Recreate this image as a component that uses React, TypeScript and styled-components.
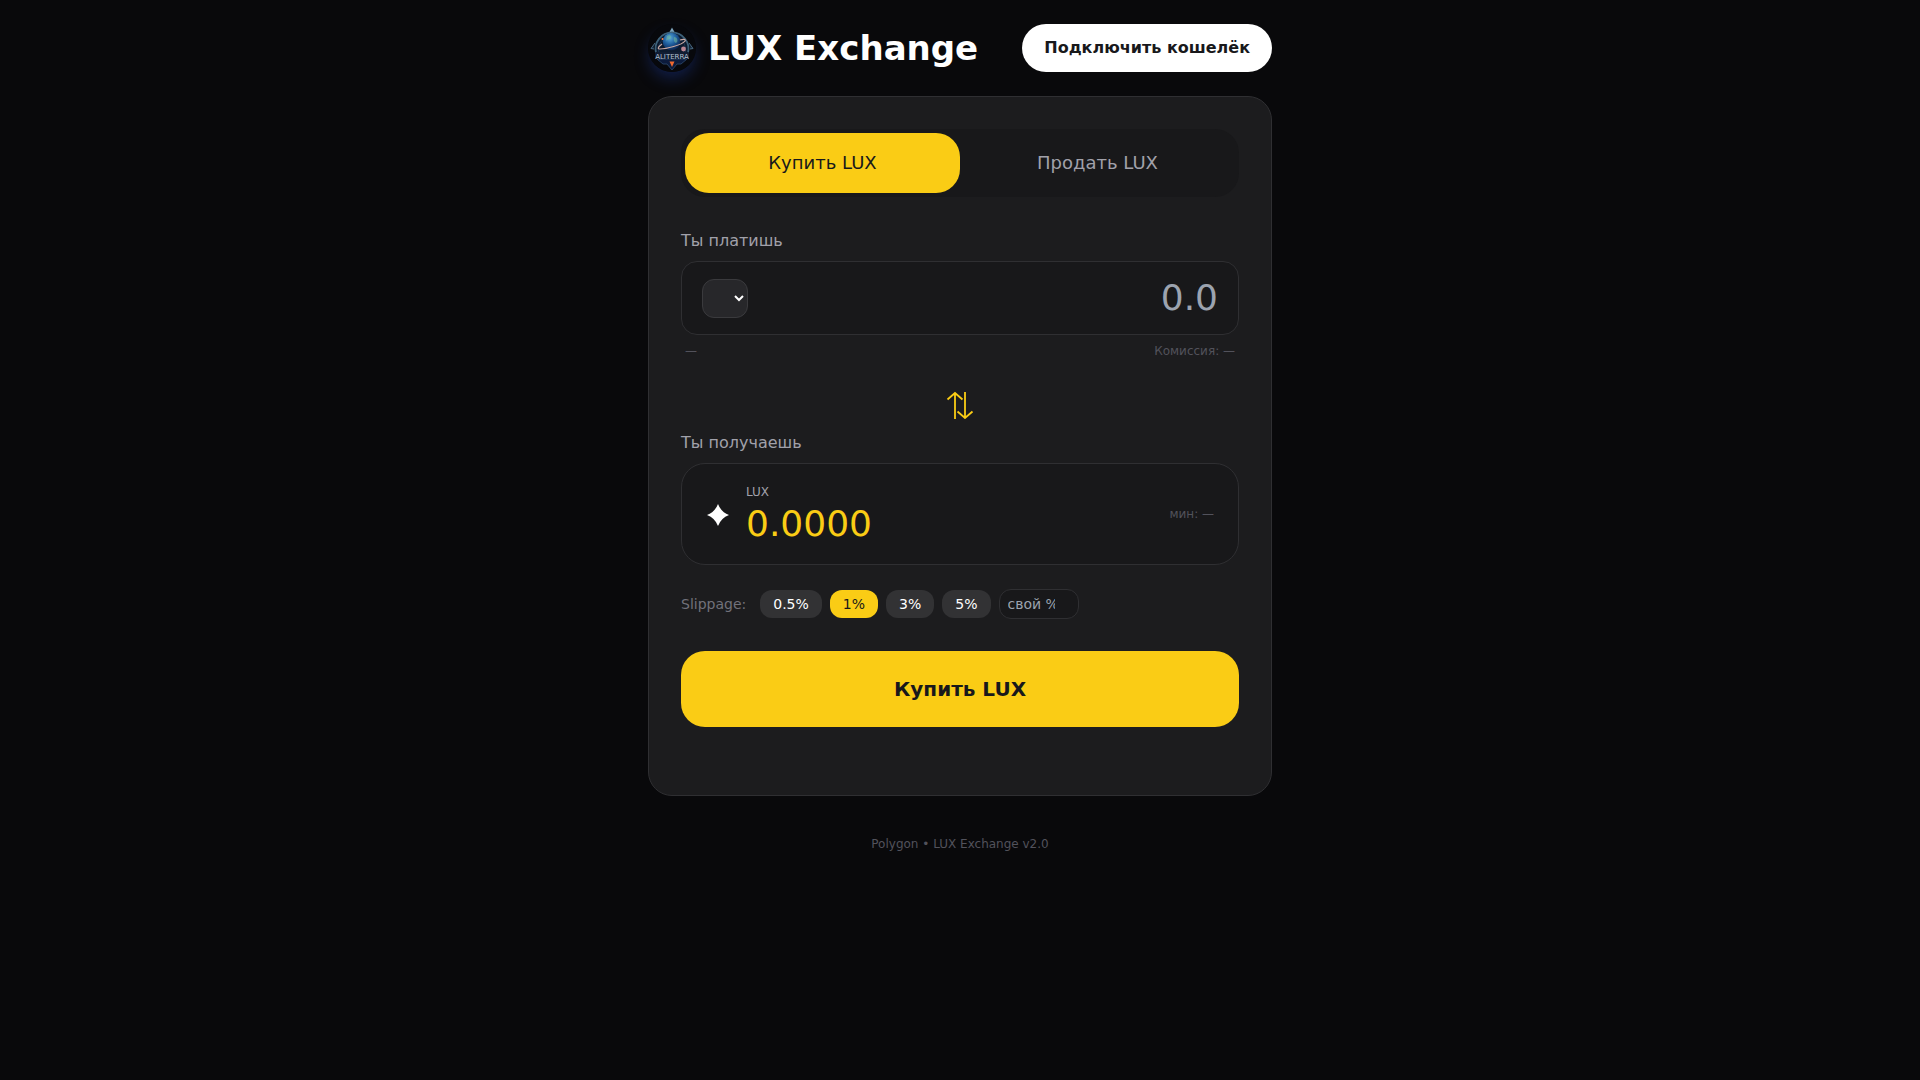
import { useState } from 'react';
import styled, { createGlobalStyle } from 'styled-components';

const GlobalStyle = createGlobalStyle`
  * {
    box-sizing: border-box;
  }
  body {
    margin: 0;
    min-height: 100vh;
    background-color: #09090b;
    color: #ffffff;
    font-family: Verdana, 'DejaVu Sans', sans-serif;
    font-size: 16px;
    line-height: 24px;
  }
  button, input, select {
    font-family: inherit;
    color: inherit;
    margin: 0;
  }
  button {
    border: none;
    cursor: pointer;
  }
`;

const Wrapper = styled.div`
  max-width: 672px;
  margin: 0 auto;
  padding: 24px;
`;
const Header = styled.header`
  display: flex;
  align-items: center;
  justify-content: space-between;
  margin-bottom: 24px;
`;
const Brand = styled.div`
  display: flex;
  align-items: center;
  gap: 12px;
`;
const LogoIcon = styled.svg`
  width: 48px;
  height: 48px;
  border-radius: 50%;
  box-shadow: 0 8px 16px -2px rgba(30, 64, 175, 0.4);
`;
const Title = styled.h1`
  margin: 0;
  font-size: 34px;
  line-height: 42px;
  font-weight: 700;
`;
const ConnectButton = styled.button`
  padding: 12px 22px;
  border-radius: 24px;
  background-color: #ffffff;
  color: #18181b;
  font-size: 16px;
  line-height: 24px;
  font-weight: 700;
`;
const Card = styled.main`
  padding: 32px;
  border: 1px solid #2f2f32;
  border-radius: 24px;
  background-color: #1c1c1e;
`;
const Tabs = styled.div`
  display: flex;
  padding: 4px;
  margin-bottom: 32px;
  border-radius: 24px;
  background-color: #18181a;
`;
const Tab = styled.button<{ $active: boolean }>`
  flex: 1;
  padding: 16px;
  border-radius: 24px;
  background-color: ${(props) => (props.$active ? '#facc15' : 'transparent')};
  color: ${(props) => (props.$active ? '#18181b' : '#a1a1aa')};
  font-size: 18px;
  line-height: 28px;
`;
const Label = styled.label`
  display: block;
  margin-bottom: 8px;
  color: #a1a1aa;
`;
const PayBox = styled.div`
  display: flex;
  align-items: center;
  padding: 16px 20px;
  border: 1px solid #2f2f32;
  border-radius: 16px;
  background-color: #18181a;
`;
const TokenSelect = styled.select`
  padding: 8px 12px;
  border: 1px solid #3a3a3d;
  border-radius: 12px;
  background-color: #27272a;
  font-size: 16px;
`;
const AmountInput = styled.input`
  flex: 1;
  min-width: 0;
  height: 40px;
  padding: 0;
  border: none;
  outline: none;
  background: transparent;
  font-size: 36px;
  line-height: 40px;
  text-align: right;
  &::placeholder {
    color: #9ca3af;
  }
`;
const Info = styled.div`
  display: flex;
  justify-content: space-between;
  margin-top: 8px;
  padding: 0 4px;
  color: #52525b;
  font-size: 12px;
  line-height: 16px;
`;
const Arrows = styled.div`
  display: flex;
  justify-content: center;
  padding: 32px 0 12px;
`;
const ReceiveBox = styled.div`
  display: flex;
  align-items: center;
  gap: 12px;
  padding: 20px 24px;
  border: 1px solid #2f2f32;
  border-radius: 24px;
  background-color: #18181a;
`;
const Receive = styled.div`
  flex: 1;
  display: flex;
  flex-direction: column;
  gap: 4px;
`;
const Token = styled.span`
  color: #a1a1aa;
  font-size: 12px;
  line-height: 16px;
`;
const Amount = styled.output`
  color: #facc15;
  font-size: 36px;
  line-height: 40px;
`;
const Minimum = styled.span`
  color: #52525b;
  font-size: 12px;
  line-height: 16px;
`;
const Slippage = styled.div`
  display: flex;
  align-items: center;
  gap: 8px;
  margin: 24px 0 32px;
`;
const SlippageLabel = styled.label`
  margin-right: 6px;
  color: #71717a;
  font-size: 14px;
  line-height: 20px;
`;
const Chip = styled.button<{ $active: boolean }>`
  padding: 4px 13px;
  border-radius: 12px;
  background-color: ${(props) => (props.$active ? '#facc15' : '#323234')};
  color: ${(props) => (props.$active ? '#18181b' : '#ffffff')};
  font-size: 14px;
  line-height: 20px;
`;
const CustomInput = styled.input`
  width: 80px;
  height: 30px;
  padding: 4px 8px;
  border: 1px solid #2f2f32;
  border-radius: 12px;
  outline: none;
  background-color: #18181a;
  font-size: 14px;
  line-height: 20px;
  &::placeholder {
    color: #9ca3af;
  }
`;
const SubmitButton = styled.button`
  width: 100%;
  padding: 24px;
  border-radius: 24px;
  background-color: #facc15;
  color: #18181b;
  font-size: 20px;
  line-height: 28px;
  font-weight: 700;
`;
const Status = styled.div`
  min-height: 20px;
  margin-top: 16px;
`;
const Footer = styled.footer`
  margin-top: 40px;
  color: #52525b;
  font-size: 12px;
  line-height: 16px;
  text-align: center;
`;

function Logo() {
  return (
    <LogoIcon viewBox="0 0 48 48" aria-hidden="true">
      <defs>
        <radialGradient id="planet" cx="0.4" cy="0.3" r="0.75">
          <stop offset="0" stopColor="#5aa9d6" />
          <stop offset="0.5" stopColor="#1d5c9c" />
          <stop offset="1" stopColor="#0b1d45" />
        </radialGradient>
      </defs>
      <circle cx="24" cy="24" r="24" fill="#07080c" />
      <path d="M24 3.500l2.500 4.500h-5z" fill="#7fa6bd" />
      <path d="M8 29a16.500 16.500 0 1 1 32 0" fill="#0c1a2e" stroke="#3d6179" strokeWidth="1.800" />
      <path d="M11 29a13.500 13.500 0 1 1 26 0" fill="none" stroke="#1c3550" strokeWidth="1" />
      <path d="M7 19l-4 5.500 3 .5M41 19l4 5.500-3 .5" fill="#16283c" stroke="#49677f" strokeWidth="1" />
      <circle cx="23.500" cy="17.500" r="8.800" fill="url(#planet)" />
      <path d="M19 12c3-2 5 0 4 2s-4 1-5 3zM26 13c3 0 4 3 3 5s-4 0-3-5z" fill="#6fb49b" opacity="0.6" />
      <path d="M14 20c-4 3-5 5-2 5 6 0 22-4 25-8 1-2-2-2-5-1" fill="none" stroke="#c9a9a4" strokeWidth="1.200" />
      <circle cx="14.500" cy="15" r="1" fill="#ff8245" />
      <circle cx="35.500" cy="25" r="2.400" fill="#b98592" />
      <path d="M9 35h30l-6 5h-4l-5 6-5-6h-4z" fill="#0c1b3c" stroke="#274062" strokeWidth="1" />
      <path d="M21.500 37.500h5L24 43z" fill="#f0692f" />
      <rect x="7" y="28" width="34" height="7" rx="1" fill="#111d33" />
      <text x="24" y="35" fill="#b4c2d2" fontFamily="DejaVu Sans" fontSize="7" textAnchor="middle">
        ALITERRA
      </text>
    </LogoIcon>
  );
}

function SwapIcon() {
  return (
    <svg width="28" height="28" viewBox="0 0 28 28" fill="none" stroke="#facc15" strokeWidth="1.800" aria-hidden="true">
      <path d="M9 28V2M1.500 8.500L9 2l7.500 6.500" />
      <path d="M19 1v26M11.500 20.500L19 27l7.500-6.500" />
    </svg>
  );
}

function StarIcon() {
  return (
    <svg width="28" height="24" viewBox="0 0 28 24" fill="#ffffff" aria-hidden="true">
      <path d="M12 2Q15 10 23 13Q15 16 12 24Q9 16 1 13Q9 10 12 2Z" />
    </svg>
  );
}

const slippages = ['0.5', '1', '3', '5'];

export default function App() {
  const [mode, setMode] = useState('buy');
  const [slippage, setSlippage] = useState('1');

  return (
    <>
      <GlobalStyle />
      <Wrapper>
        <Header>
          <Brand>
            <Logo />
            <Title>LUX Exchange</Title>
          </Brand>
          <ConnectButton>Подключить кошелёк</ConnectButton>
        </Header>
        <Card>
          <Tabs>
            <Tab $active={mode === 'buy'} onClick={() => setMode('buy')}>
              Купить LUX
            </Tab>
            <Tab $active={mode === 'sell'} onClick={() => setMode('sell')}>
              Продать LUX
            </Tab>
          </Tabs>
          <Label id="pay-label" htmlFor="pay">
            Ты платишь
          </Label>
          <PayBox>
            <TokenSelect aria-labelledby="pay-label" />
            <AmountInput id="pay" inputMode="decimal" placeholder="0.0" />
          </PayBox>
          <Info>
            <span>—</span>
            <span>Комиссия: —</span>
          </Info>
          <Arrows>
            <SwapIcon />
          </Arrows>
          <Label htmlFor="receive">Ты получаешь</Label>
          <ReceiveBox>
            <StarIcon />
            <Receive>
              <Token>LUX</Token>
              <Amount id="receive">0.0000</Amount>
            </Receive>
            <Minimum>мин: —</Minimum>
          </ReceiveBox>
          <Slippage>
            <SlippageLabel htmlFor="slippage">Slippage:</SlippageLabel>
            {slippages.map((value) => (
              <Chip key={value} $active={slippage === value} onClick={() => setSlippage(value)}>
                {value}%
              </Chip>
            ))}
            <CustomInput id="slippage" type="number" placeholder="свой %" />
          </Slippage>
          <SubmitButton>{mode === 'buy' ? 'Купить LUX' : 'Продать LUX'}</SubmitButton>
          <Status />
        </Card>
        <Footer>Polygon • LUX Exchange v2.0</Footer>
      </Wrapper>
    </>
  );
}
